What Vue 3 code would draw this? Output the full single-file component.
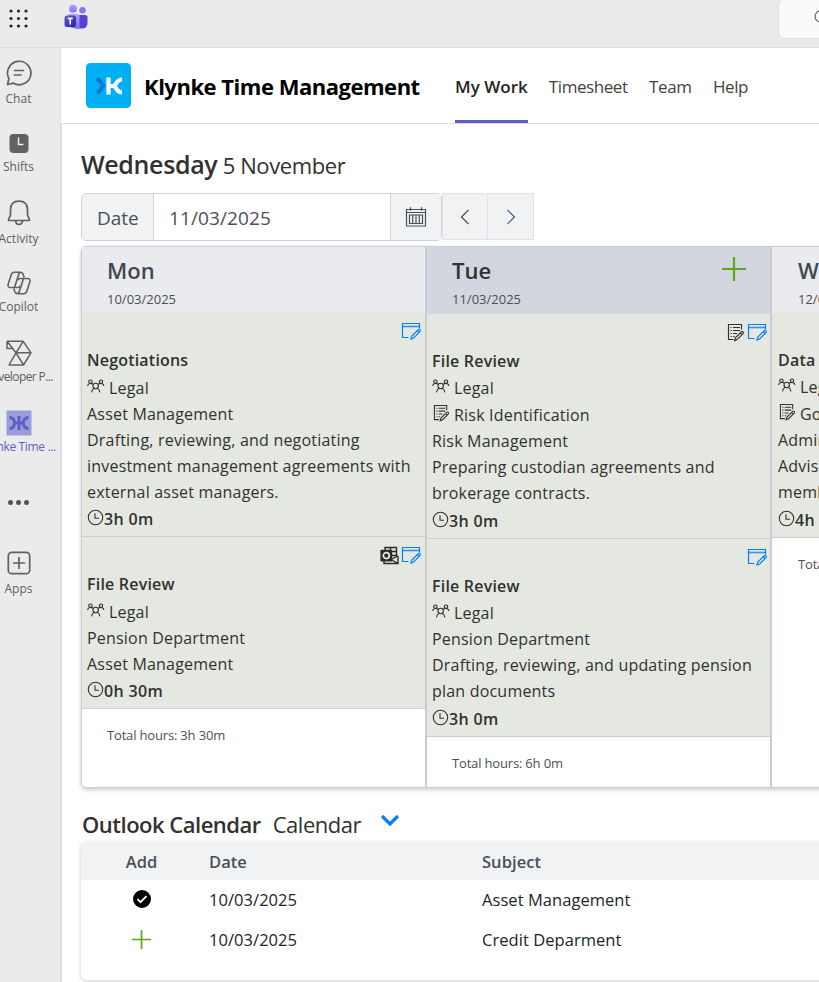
<template>
    <div class="window">
        <svg class="defs" width="0" height="0">
            <symbol id="edit" viewBox="0 0 20 18">
                <g fill="none" stroke="#0a7cff" stroke-width="1.2">
                    <path d="M7.500 15.500H1.500V1.500h17v5" />
                    <path d="M1.500 4.500h17" stroke-width="1.600" opacity=".8" />
                    <path d="M10 17l.8-3 6.400-6.300q1-.7 1.800.1.8.9 0 1.800l-6.400 6.400zM16.200 8.700l1.800 1.800" />
                </g>
            </symbol>
            <symbol id="note" viewBox="0 0 18 19">
                <g fill="none" stroke="currentColor" stroke-width="1.15">
                    <path d="M6.500 16.500H1.500V1.500h13v5" />
                    <path d="M3.500 4.500h1.200M6 4.500h7M3.500 7.500h1.200M6 7.500h7M3.500 10.500h1.200M6 10.500h4M3.500 13.500h1.200M6 13.500h1.600" />
                    <path d="M7.600 17.800l.8-3 6-6q.9-.7 1.700.1t0 1.700l-6 6zM13.400 9.900l1.700 1.700" />
                </g>
            </symbol>
            <symbol id="team" viewBox="0 0 18 15">
                <g fill="none" stroke="currentColor" stroke-width="1.1">
                    <circle cx="8.700" cy="7" r="2.700" />
                    <circle cx="3.400" cy="2.700" r="1.700" />
                    <circle cx="14" cy="2.700" r="1.700" />
                    <path d="M.5 6.800Q.9 4.500 3.400 4.500T6.400 5.600M16.900 6.800Q16.500 4.500 14 4.500T11 5.600M4.500 13.400Q4.900 10.200 7.200 9.300M12.900 13.400Q12.500 10.200 10.200 9.300" />
                </g>
            </symbol>
            <symbol id="clock" viewBox="0 0 17 17">
                <g fill="none" stroke="currentColor" stroke-width="1.1">
                    <circle cx="8.500" cy="8.500" r="7.200" />
                    <path d="M8 4.300V9.200h4" />
                </g>
            </symbol>
            <symbol id="outlook" viewBox="0 0 19 19">
                <path d="M5 4V1.500h11.500v8l1.500 1V17.500H4v-3M10.500 1.700v4M10 5.500h6M11 9.500h5M11.500 13.500l6-3.500M11 13.500l7 4" fill="none" stroke="#2b2b2b" stroke-width="1.400" />
                <rect x=".4" y="3.800" width="11.800" height="11.600" rx="1" fill="#2b2b2b" />
                <circle cx="6.300" cy="9.600" r="3" fill="none" stroke="#e4e8e0" stroke-width="1.700" />
            </symbol>
            <symbol id="plus" viewBox="0 0 24 24">
                <path d="M12 0v24M0 12h24" fill="none" stroke="#5ea718" stroke-width="2.200" />
            </symbol>
        </svg>

        <header class="topbar">
            <svg class="waffle" width="20" height="20" viewBox="0 0 20 20">
                <template v-for="y in 3" :key="y">
                    <circle v-for="x in 3" :key="x" :cx="x * 7.5 - 4.500" :cy="y * 7.5 - 4.500" r="1.600" fill="#222" />
                </template>
            </svg>
            <svg class="teams" width="24" height="26" viewBox="0 0 24 26">
                <defs>
                    <linearGradient id="lilac" x1="0" y1="0" x2="0" y2="1">
                        <stop offset="0" stop-color="#b79bfb" />
                        <stop offset="1" stop-color="#7a78f2" />
                    </linearGradient>
                    <linearGradient id="indigo" x1="0" y1="0" x2="1" y2="1">
                        <stop offset="0" stop-color="#5a5ee8" />
                        <stop offset="1" stop-color="#2b2394" />
                    </linearGradient>
                </defs>
                <circle cx="9" cy="4.700" r="3.900" fill="url(#lilac)" />
                <circle cx="18.500" cy="6.200" r="3.200" fill="#8378f5" />
                <path d="M13 11h8q2.500 0 2.500 2.500V19q0 5.500-6 5.500H11z" fill="#5b3fd0" />
                <path d="M4 11.500Q4 10 6 10h7q2.500 0 2.500 2.500V22q0 2.500 2 2.500h-6Q4 24.500 4 18z" fill="url(#lilac)" />
                <rect x=".5" y="11.500" width="11.500" height="11.500" rx="2.500" fill="url(#indigo)" />
                <path d="M3.700 14.400h5.100M6.250 14.400v6" stroke="#fff" stroke-width="1.600" />
            </svg>
            <div class="search">
                <svg width="16" height="16" viewBox="0 0 16 16" fill="none" stroke="#666" stroke-width="1.200">
                    <circle cx="6.500" cy="6.500" r="5.500" />
                    <path d="M10.500 10.500l5 5" />
                </svg>
            </div>
        </header>

        <div class="body">
            <nav class="rail">
                <div class="rail-item low">
                    <svg width="26" height="26" viewBox="0 0 26 26" fill="none" stroke="#616161" stroke-width="1.700">
                        <path d="M1.500 24.500l1.400-6A11.700 11.700 0 1 1 7.500 23.200zM8.500 10.500h9M8.500 15h6.500" stroke-linejoin="round" stroke-linecap="round" />
                    </svg>
                    <span>Chat</span>
                </div>
                <div class="rail-item">
                    <svg width="26" height="26" viewBox="0 0 26 26">
                        <rect x="3.500" y="4" width="19" height="19" rx="4" fill="#616161" />
                        <path d="M12.500 7.500v7h5" fill="none" stroke="#eee" stroke-width="1.500" />
                    </svg>
                    <span>Shifts</span>
                </div>
                <div class="rail-item low">
                    <svg width="26" height="26" viewBox="0 0 26 26" fill="none" stroke="#616161" stroke-width="1.700" stroke-linejoin="round">
                        <path d="M13 1.200q-8.500 0-8.500 8.500v5.500l-2 4.300q-.3 1 .7 1h19.600q1 0 .7-1l-2-4.300V9.700q0-8.500-8.500-8.500z" />
                        <path d="M9.500 21q.5 3.500 3.500 3.500t3.500-3.500" />
                    </svg>
                    <span>Activity</span>
                </div>
                <div class="rail-item">
                    <svg width="26" height="26" viewBox="0 0 26 26" fill="none" stroke="#616161" stroke-width="1.600" stroke-linejoin="round">
                        <path d="M18.200 7.500L17 4Q16.300 2.300 14.500 2.300H8.300Q6 2.300 5.200 4.700L2.200 14Q1.300 17.500 4.500 17.500h4L12.500 5q.8-2.700 3-2.700" />
                        <path d="M7.800 18.500L9 22q.7 1.700 2.500 1.700h6.200q2.300 0 3.100-2.400l3-9.300Q24.700 8.500 21.500 8.500h-4L13.500 21q-.8 2.700-3 2.700" />
                        <path d="M8.500 17.500h3.500q1.500 0 2.100-1.800M17.500 8.500H14q-1.500 0-2.100 1.800" />
                    </svg>
                    <span>Copilot</span>
                </div>
                <div class="rail-item dev">
                    <svg width="26" height="26" viewBox="0 0 26 26" fill="none" stroke="#616161" stroke-width="1.500" stroke-linejoin="round">
                        <path d="M1 1.300h16.200L25 12.800 17.500 25H3L10 12.800M1 1.300L10 12.800H25M10 12.800l7.500 12.200M10 12.800L17.200 1.300M1 1.300v7.200h5.500" />
                    </svg>
                    <span>Developer P...</span>
                </div>
                <div class="rail-item active">
                    <svg width="26" height="26" viewBox="0 0 26 26">
                        <rect x=".5" y=".5" width="25" height="25" fill="#9a9cdb" />
                        <path d="M13 6v14M3.500 7.500q3.500 0 4.500 3l1 2.500-1 2.500q-1 3-4.500 3M22.500 7.500q-3.500 0-4.500 3L17 13l1 2.500q1 3 4.500 3M9 13h8" fill="none" stroke="#5b5fc7" stroke-width="3" />
                    </svg>
                    <span>Klynke Time ...</span>
                </div>
                <div class="rail-more">
                    <i v-for="dot in 3" :key="dot"></i>
                </div>
                <div class="rail-item low">
                    <svg width="26" height="26" viewBox="0 0 26 26" fill="none" stroke="#616161" stroke-width="1.700">
                        <rect x="2.300" y="2.300" width="21.400" height="21.400" rx="3.500" />
                        <path d="M13 7v12M7 13h12" />
                    </svg>
                    <span>Apps</span>
                </div>
            </nav>

            <div class="content">
                <div class="app-header">
                    <svg class="logo" width="45" height="45" viewBox="0 0 45 45">
                        <rect width="45" height="45" rx="4.500" fill="#00b0f5" />
                        <path d="M10.500 16.500q3 0 4.500 3l2 3.300-2 3.200q-1.500 3.300-4.500 3.300" fill="none" stroke="#0a74d6" stroke-width="4" />
                        <path d="M22.500 14.500v17M36 16.500q-3.500 0-5.500 3.500l-2 3 2 3q2 3.500 5.500 3.500M22 23h7" fill="none" stroke="#fff" stroke-width="4.200" />
                    </svg>
                    <h1>Klynke Time Management</h1>
                    <a v-for="tab in tabs" :key="tab" class="tab" :class="{ current: tab === activeTab }" @click="activeTab = tab"><span>{{ tab }}</span></a>
                </div>

                <main>
                    <h2><b>Wednesday</b> <span>5 November</span></h2>
                    <div class="picker">
                        <div class="group">
                            <label>Date</label>
                            <div class="value">11/03/2025</div>
                            <button class="cal">
                                <svg width="22" height="20" viewBox="0 0 22 20" fill="none" stroke="#495057" stroke-width="1.200">
                                    <path d="M1.500 2.500h19v16.500h-19zM1.500 5.500h19M5.500 .3v3.500M16.500 .3v3.500" />
                                    <path d="M4.500 8v8.500h13V8zM7.700 8v8.500M11 8v8.500M14.300 8v8.500" />
                                </svg>
                            </button>
                        </div>
                        <button class="step">
                            <svg width="10" height="16" viewBox="0 0 10 16" fill="none" stroke="#495057" stroke-width="1.200"><path d="M8.500 1L1.500 8l7 7" /></svg>
                        </button>
                        <button class="step next">
                            <svg width="10" height="16" viewBox="0 0 10 16" fill="none" stroke="#3f5f7c" stroke-width="1.200"><path d="M1.500 1l7 7-7 7" /></svg>
                        </button>
                    </div>

                    <div class="week">
                        <section v-for="day in days" :key="day.name" class="day" :class="day.style">
                            <div class="day-head">
                                <strong>{{ day.name }}</strong>
                                <small>{{ day.date }}</small>
                                <svg v-if="day.style === 'today'" class="add" width="24" height="24"><use href="#plus" /></svg>
                            </div>
                            <article v-for="(task, key) in day.tasks" :key="key" class="task">
                                <div class="tools">
                                    <svg v-if="task.flag === 'note'" width="18" height="19"><use href="#note" /></svg>
                                    <svg v-if="task.flag === 'outlook'" width="19" height="19"><use href="#outlook" /></svg>
                                    <svg width="20" height="18"><use href="#edit" /></svg>
                                </div>
                                <h3>{{ task.title }}</h3>
                                <div class="meta"><svg width="18" height="15"><use href="#team" /></svg>{{ task.team }}</div>
                                <div v-if="task.topic" class="meta"><svg class="topic" width="17" height="18"><use href="#note" /></svg>{{ task.topic }}</div>
                                <p>{{ task.text }}</p>
                                <div class="spent"><svg width="17" height="17"><use href="#clock" /></svg>{{ task.spent }}</div>
                            </article>
                            <div class="total">Total hours: {{ day.total }}</div>
                        </section>
                    </div>

                    <div class="outlook-title">
                        <b>Outlook Calendar</b>
                        <span>Calendar</span>
                        <svg width="20" height="13" viewBox="0 0 20 13"><path d="M2 2l8 8 8-8" fill="none" stroke="#0a7cff" stroke-width="3.200" /></svg>
                    </div>
                    <div class="events">
                        <div class="row head">
                            <div class="mark">Add</div>
                            <div class="when">Date</div>
                            <div>Subject</div>
                        </div>
                        <div v-for="event in events" :key="event.subject" class="row">
                            <div class="mark">
                                <svg v-if="event.added" width="18" height="18" viewBox="0 0 18 18">
                                    <circle cx="9" cy="9" r="9" fill="#000" />
                                    <path d="M4.500 9.200l3 3 6-6" fill="none" stroke="#fff" stroke-width="1.900" />
                                </svg>
                                <svg v-else width="19" height="19"><use href="#plus" /></svg>
                            </div>
                            <div class="when">{{ event.date }}</div>
                            <div>{{ event.subject }}</div>
                        </div>
                    </div>
                </main>
            </div>
        </div>
    </div>
</template>

<script setup>
    import { ref } from 'vue'
    const tabs = ['My Work', 'Timesheet', 'Team', 'Help']
    const activeTab = ref('My Work')
    const days = ref([
        {
            name: 'Mon',
            date: '10/03/2025',
            style: 'past',
            total: '3h 30m',
            tasks: [
                {
                    title: 'Negotiations',
                    team: 'Legal',
                    text: 'Asset Management\nDrafting, reviewing, and negotiating\ninvestment management agreements with\nexternal asset managers.',
                    spent: '3h 0m'
                },
                {
                    title: 'File Review',
                    team: 'Legal',
                    text: 'Pension Department\nAsset Management',
                    spent: '0h 30m',
                    flag: 'outlook'
                }
            ]
        },
        {
            name: 'Tue',
            date: '11/03/2025',
            style: 'today',
            total: '6h 0m',
            tasks: [
                {
                    title: 'File Review',
                    team: 'Legal',
                    topic: 'Risk Identification',
                    text: 'Risk Management\nPreparing custodian agreements and\nbrokerage contracts.',
                    spent: '3h 0m',
                    flag: 'note'
                },
                {
                    title: 'File Review',
                    team: 'Legal',
                    text: 'Pension Department\nDrafting, reviewing, and updating pension\nplan documents',
                    spent: '3h 0m'
                }
            ]
        },
        {
            name: 'Wed',
            date: '12/03/2025',
            style: 'future',
            total: '4h 0m',
            tasks: [
                {
                    title: 'Data Protection',
                    team: 'Legal',
                    topic: 'Governance',
                    text: 'Administration\nAdvising board\nmembers',
                    spent: '4h 0m'
                }
            ]
        }
    ])
    const events = ref([
        { date: '10/03/2025', subject: 'Asset Management', added: true },
        { date: '10/03/2025', subject: 'Credit Deparment', added: false }
    ])
</script>

<style>
body {
    overflow: hidden;
}
</style>

<style scoped>
* {
    box-sizing: border-box;
}
.window {
    height: 982px;
    display: flex;
    flex-direction: column;
    overflow: hidden;
    background: #ebebeb;
    color: #323130;
    font-family: "Open Sans", "Noto Sans", sans-serif;
    font-size: 16px;
}
.defs {
    position: absolute;
}
h1, h2, h3, p {
    margin: 0;
}
svg {
    flex: none;
}
button {
    padding: 0;
    display: flex;
    align-items: center;
    justify-content: center;
}
.topbar {
    height: 48px;
    flex: none;
    display: flex;
    align-items: flex-start;
    border-bottom: 1px solid #dcdcdc;
}
.waffle {
    margin: 8px 0 0 8px;
}
.teams {
    margin: 4px 0 0 36px;
}
.search {
    width: 61px;
    flex: none;
    height: 40px;
    margin: -1px -20px 0 auto;
    padding: 9px 0 0 35px;
    border: 1px solid #dedede;
    border-radius: 6px;
    background: #fafafa;
}
.body {
    flex: 1;
    min-height: 0;
    display: flex;
}
.rail {
    width: 75px;
    flex: none;
    margin-left: -19px;
    padding-top: 12px;
}
.rail-item {
    height: 70px;
    display: flex;
    flex-direction: column;
    align-items: center;
    font-size: 12px;
    line-height: 16px;
    color: #616161;
    white-space: nowrap;
    letter-spacing: 0;
}
.rail-item span {
    margin-top: 3px;
}
.rail-item.low span {
    margin-top: 5px;
}
.dev {
    letter-spacing: -.6px;
}
.active {
    letter-spacing: -.35px;
    color: #5b5fc7;
}
.rail-more {
    height: 70px;
    padding-top: 20px;
    display: flex;
    justify-content: center;
    gap: 3px;
}
.rail-more i {
    width: 5px;
    height: 5px;
    border-radius: 50%;
    background: #555;
}
.content {
    flex: 1;
    min-width: 0;
    margin-left: 4px;
    display: flex;
    flex-direction: column;
    background: #fff;
}
.app-header {
    height: 76px;
    flex: none;
    padding-left: 25px;
    display: flex;
    align-items: center;
    border-left: 1px solid #dedede;
    border-bottom: 1px solid #dedede;
    white-space: nowrap;
}
h1 {
    width: 277px;
    margin: 0 34px 0 13px;
    font-size: 22px;
    font-weight: 700;
    letter-spacing: -.48px;
    color: #000;
}
.tab {
    height: 75px;
    margin-right: 21.500px;
    padding-top: 2px;
    display: flex;
    align-items: center;
    font-size: 17px;
    letter-spacing: -.43px;
    color: #424242;
}
.current {
    margin-right: 21px;
    border-bottom: 3px solid #5b5fc7;
    padding-top: 5px;
    font-weight: 600;
    letter-spacing: .02px;
    color: #242424;
}
main {
    flex: 1;
    padding-left: 19px;
    border-left: 2px solid #dedede;
}
h2 {
    height: 69px;
    padding-top: 23px;
    font-size: 22px;
    font-weight: 400;
    line-height: 34px;
    letter-spacing: -.4px;
    white-space: nowrap;
}
h2 b {
    font-size: 25px;
    font-weight: 600;
    letter-spacing: -.35px;
}
.picker {
    height: 48px;
    display: flex;
    color: #495057;
}
.group {
    width: 361px;
    display: flex;
    border: 1px solid #ced4da;
    border-radius: 5px;
    font-size: 19px;
    line-height: 48px;
    overflow: hidden;
}
label {
    width: 72px;
    padding-left: 15px;
    background: #f0f2f4;
    border-right: 1px solid #ced4da;
}
.value {
    flex: 1;
    padding-left: 15px;
    letter-spacing: .1px;
}
.cal {
    width: 51px;
    border: 0;
    border-left: 1px solid #ced4da;
    background: #f0f2f4;
}
.step {
    width: 46px;
    height: 47px;
    border: 1px solid #dee2e6;
    background: #f0f2f4;
}
.next {
    border-left: 0;
}
.week {
    width: 1035px;
    height: 542px;
    margin-top: 5px;
    display: flex;
    border-radius: 5px;
    box-shadow: 0 2px 4px rgba(0, 0, 0, .2);
}
.day {
    width: 345px;
    border: 1px solid #c9cbd6;
}
.day:first-child {
    border-radius: 5px 0 0 5px;
}
.day-head {
    position: relative;
    height: 66px;
    padding: 8px 0 0 25px;
    display: flex;
    flex-direction: column;
    background: #e9ebef;
    color: #424750;
}
.today .day-head {
    height: 67px;
    background: #d3d6de;
    color: #323130;
}
.day-head strong {
    font-size: 22px;
    font-weight: 600;
    line-height: 30px;
}
.day-head small {
    font-size: 13px;
    line-height: 28px;
    color: #495057;
}
.future .day-head, .future .total {
    padding-left: 26px;
}
.add {
    position: absolute;
    top: 10px;
    right: 24px;
}
.task {
    padding: 0 5px 3px;
    border-bottom: 1px solid #ccd0cb;
    background: #e4e8e0;
    white-space: pre;
    line-height: 26px;
    letter-spacing: .2px;
}
.tools {
    height: 34px;
    padding: 9px 0 0;
    margin-right: -2px;
    display: flex;
    justify-content: flex-end;
    gap: 2px;
}
.past .tools {
    margin-right: -1px;
}
h3 {
    font-size: 16px;
    font-weight: 600;
    line-height: 26px;
    letter-spacing: .2px;
}
.meta {
    height: 28px;
    padding-top: 2px;
    display: flex;
    gap: 4px;
}
.meta svg {
    margin-top: 4px;
}
.meta svg.topic {
    margin: 2px 0 0 1px;
}
.spent {
    height: 28px;
    padding-top: 1px;
    display: flex;
    font-weight: 600;
    letter-spacing: .35px;
}
.spent svg {
    margin-top: 3px;
}
.today .meta, .future .meta {
    height: 27px;
    padding-top: 1px;
}
.today .task, .future .task {
    padding-bottom: 4px;
}
.future .task {
    padding-left: 6px;
}
.today .spent, .future .spent {
    padding-top: 2px;
}
.total {
    padding: 16px 0 0 25px;
    font-size: 13px;
    line-height: 20px;
    letter-spacing: -.17px;
    color: #495057;
}
.outlook-title {
    height: 54px;
    padding: 19px 0 0 1px;
    display: flex;
    font-size: 22px;
    line-height: 34px;
    letter-spacing: -.5px;
}
.outlook-title b {
    font-weight: 600;
    margin-right: 12px;
}
.outlook-title svg {
    margin: 7px 0 0 19px;
}
.events {
    width: 1035px;
    height: 138px;
    border-radius: 5px;
    box-shadow: 0 1px 4px rgba(0, 0, 0, .2);
    overflow: hidden;
}
.row {
    height: 40px;
    padding-bottom: 2px;
    display: flex;
    align-items: center;
    color: #212529;
    font-size: 16.500px;
    letter-spacing: .05px;
}
.head {
    height: 38px;
    padding-bottom: 0;
    background: #f0f2f4;
    font-weight: 600;
    color: #495057;
}
.mark {
    width: 121px;
    display: flex;
    justify-content: center;
}
.when {
    width: 280px;
    padding-left: 7px;
}
</style>
